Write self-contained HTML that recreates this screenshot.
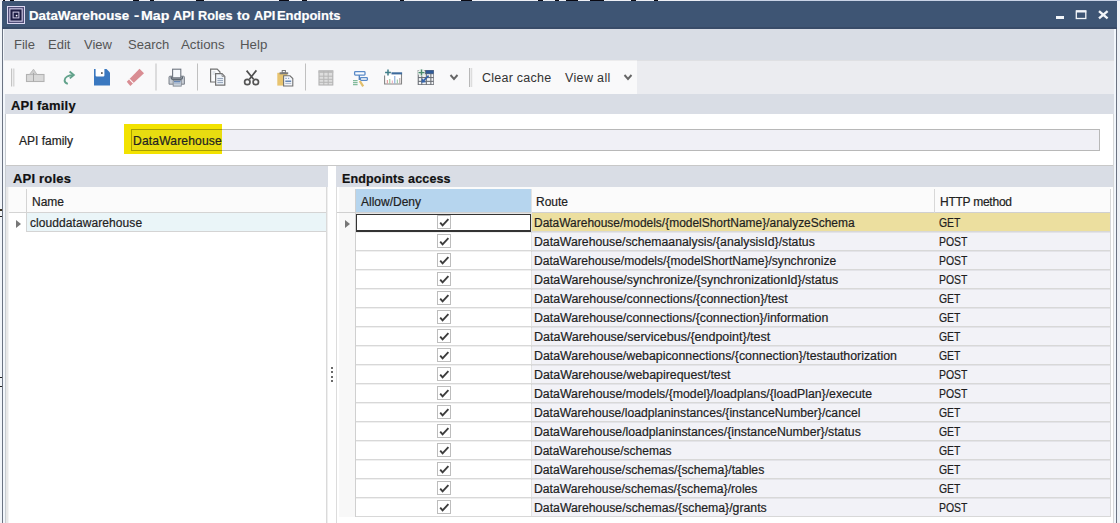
<!DOCTYPE html>
<html><head><meta charset="utf-8">
<style>
*{box-sizing:border-box;margin:0;padding:0}
html,body{width:1120px;height:523px;overflow:hidden;background:#fff;position:relative;font-family:"Liberation Sans",sans-serif;color:#1e1e1e}
.a{position:absolute}
.t{position:absolute;white-space:pre;line-height:1;-webkit-text-stroke:0.2px currentColor}
</style></head><body>
<!-- window frame -->
<div class="a" style="left:0;top:0;width:700px;height:1px;background:#eef0f6"></div>
<div class="a" style="left:700px;top:0;width:420px;height:1px;background:#c9d3e6"></div>
<div class="a" style="left:3px;top:0;width:2px;height:1px;background:#0a0a14"></div><div class="a" style="left:10px;top:0;width:4px;height:1px;background:#0a0a14"></div><div class="a" style="left:133px;top:0;width:6px;height:1px;background:#0a0a14"></div><div class="a" style="left:150px;top:0;width:4px;height:1px;background:#0a0a14"></div><div class="a" style="left:196px;top:0;width:8px;height:1px;background:#0a0a14"></div><div class="a" style="left:279px;top:0;width:10px;height:1px;background:#0a0a14"></div><div class="a" style="left:302px;top:0;width:5px;height:1px;background:#0a0a14"></div><div class="a" style="left:400px;top:0;width:4px;height:1px;background:#0a0a14"></div><div class="a" style="left:461px;top:0;width:11px;height:1px;background:#0a0a14"></div><div class="a" style="left:538px;top:0;width:5px;height:1px;background:#0a0a14"></div><div class="a" style="left:555px;top:0;width:4px;height:1px;background:#0a0a14"></div><div class="a" style="left:566px;top:0;width:12px;height:1px;background:#0a0a14"></div><div class="a" style="left:590px;top:0;width:14px;height:1px;background:#0a0a14"></div><div class="a" style="left:631px;top:0;width:5px;height:1px;background:#0a0a14"></div><div class="a" style="left:654px;top:0;width:4px;height:1px;background:#0a0a14"></div>
<div class="a" style="left:0;top:1px;width:2px;height:522px;background:#f2f5f9"></div>
<div class="a" style="left:1117px;top:1px;width:3px;height:522px;background:#eef1f6"></div>
<div class="a" style="left:2px;top:1px;width:1115px;height:522px;background:#6b7382"></div>
<div class="a" style="left:3px;top:29px;width:1113px;height:494px;background:#f2f6fb"></div>
<div class="a" style="left:0;top:377px;width:2px;height:1px;background:#222"></div><div class="a" style="left:0;top:386px;width:2px;height:1px;background:#222"></div><div class="a" style="left:0;top:209px;width:2px;height:2px;background:#3a3020"></div><div class="a" style="left:0;top:216px;width:2px;height:1px;background:#222"></div>
<!-- title bar -->
<div class="a" style="left:2px;top:1px;width:1115px;height:28px;background:#3e5574"></div>
<div class="a" style="left:2px;top:27px;width:1115px;height:2px;background:#384b68"></div>
<svg class="a" style="left:0;top:0" width="30" height="30" viewBox="0 0 30 30">
<rect x="7" y="6" width="18" height="18" fill="#dcd8f2"/>
<rect x="8" y="7" width="16" height="16" fill="#504e78"/>
<rect x="9.3" y="8.3" width="13.4" height="13.4" fill="#d2cee9"/>
<rect x="10.4" y="9.4" width="11.2" height="11.2" fill="#1e1d44"/>
<rect x="12.6" y="11.6" width="6.8" height="6.8" fill="#cfcbe6"/>
<rect x="13.6" y="12.6" width="4.8" height="4.8" fill="#1e1d44"/>
<circle cx="16.6" cy="15.6" r="0.9" fill="#fff"/>
</svg>
<div class="t" style="left:29px;top:9px;font-size:13px;font-weight:bold;color:#fff;transform:scaleX(1.024);transform-origin:0 0">DataWarehouse</div><div class="t" style="left:134.3px;top:9px;font-size:13px;font-weight:bold;color:#fff;transform:scaleX(1.2);transform-origin:0 0">-</div><div class="t" style="left:141.1px;top:9px;font-size:13px;font-weight:bold;color:#fff;transform:scaleX(1.088);transform-origin:0 0">Map</div><div class="t" style="left:172.9px;top:9px;font-size:13px;font-weight:bold;color:#fff;transform:scaleX(0.986);transform-origin:0 0">API</div><div class="t" style="left:198.1px;top:9px;font-size:13px;font-weight:bold;color:#fff;transform:scaleX(0.976);transform-origin:0 0">Roles</div><div class="t" style="left:236.7px;top:9px;font-size:13px;font-weight:bold;color:#fff;transform:scaleX(1.04);transform-origin:0 0">to</div><div class="t" style="left:253.6px;top:9px;font-size:13px;font-weight:bold;color:#fff;transform:scaleX(0.986);transform-origin:0 0">API</div><div class="t" style="left:276.9px;top:9px;font-size:13px;font-weight:bold;color:#fff;transform:scaleX(1.0);transform-origin:0 0">Endpoints</div>
<svg class="a" style="left:1040px;top:0" width="80" height="30" viewBox="1040 0 80 30">
<rect x="1056" y="16" width="8" height="3" fill="#f2f5f9"/>
<rect x="1076.3" y="11" width="9.5" height="7.5" fill="none" stroke="#f2f5f9" stroke-width="1.3"/>
<rect x="1076" y="10.3" width="10.3" height="2.2" fill="#f2f5f9"/>
<path d="M1099 11.2 L1107.6 18.4 M1107.6 11.2 L1099 18.4" stroke="#f2f5f9" stroke-width="2.4"/>
</svg>
<!-- menu bar -->
<div class="a" style="left:4px;top:29px;width:1110px;height:31px;background:#d9dde5"></div>
<div class="t" style="left:14px;top:38px;font-size:13px;color:#555;-webkit-text-stroke:0">File</div>
<div class="t" style="left:48px;top:38px;font-size:13px;color:#555;-webkit-text-stroke:0">Edit</div>
<div class="t" style="left:84px;top:38px;font-size:13px;color:#555;-webkit-text-stroke:0">View</div>
<div class="t" style="left:128px;top:38px;font-size:13px;color:#555;-webkit-text-stroke:0">Search</div>
<div class="t" style="left:181px;top:38px;font-size:13.3px;color:#555;-webkit-text-stroke:0">Actions</div>
<div class="t" style="left:240px;top:38px;font-size:13.3px;color:#555;-webkit-text-stroke:0">Help</div>
<!-- toolbar -->
<div class="a" style="left:4px;top:60px;width:1110px;height:34px;background:#ebecf0"></div>
<div class="a" style="left:4px;top:60px;width:633px;height:34px;background:#f9f9fa"></div><div class="a" style="left:4px;top:60px;width:1110px;height:1px;background:rgba(0,0,0,0.05)"></div>
<svg class="a" style="left:0;top:0" width="660" height="100" viewBox="0 0 660 100">
<!-- grip -->
<rect x="11" y="68.5" width="1.2" height="18" fill="#c4c4c4"/><rect x="13.2" y="68.5" width="1.2" height="18" fill="#d0d0d0"/>
<!-- icon1 gray hand -->
<rect x="26.5" y="74.5" width="17.5" height="7" fill="#d9d9d9" stroke="#b2b2b2" stroke-width="1.1"/>
<path d="M29.5 74.5 L33.5 69.2 L37 74.5 Z" fill="#cdcdcd" stroke="#b8b8b8" stroke-width="0.9"/>
<path d="M33.5 73 V81.5" stroke="#a8a8a8" stroke-width="1"/>
<!-- icon2 green redo -->
<path d="M73 75.2 C68.5 75.2 64.8 77 64.6 80.2 C64.5 81.8 66 83.2 67.8 83.8" fill="none" stroke="#62a28b" stroke-width="1.9"/>
<path d="M69.6 71.6 L73.8 75 L69.8 78.4" fill="none" stroke="#62a28b" stroke-width="1.9"/>
<!-- icon3 save -->
<path d="M94 69 H106.5 L110 72.5 V85.5 H94 Z" fill="#3a78c0"/>
<path d="M95.6 69 H104.4 V75.5 Q104.4 76.6 103.3 76.6 H96.7 Q95.6 76.6 95.6 75.5 Z" fill="#fff"/>
<rect x="101" y="72.2" width="1.7" height="1.7" fill="#555"/>
<!-- icon4 eraser -->
<path d="M139.5 68.8 L144 73.2 L130.3 86 L126.8 81.8 Z" fill="#d98d93"/>
<path d="M129.4 79.2 L133.5 83.4" stroke="#fff" stroke-width="1.1"/>
<!-- sep -->
<rect x="155.5" y="63.5" width="1" height="27" fill="#c0c0c0"/>
<!-- printer -->
<path d="M170 76.2 H183.5 Q184.4 76.2 184.4 77.2 V84.2 H169 V77.2 Q169 76.2 170 76.2 Z" fill="#c9ced5" stroke="#6f7680" stroke-width="0.9"/>
<rect x="172.6" y="69.2" width="8.2" height="8.6" fill="#f6f9fc" stroke="#6f7680" stroke-width="1.1"/>
<path d="M171.2 76.5 V77.8 Q171.2 79.2 172.6 79.2 H181 Q182.4 79.2 182.4 77.8 V76.5" fill="none" stroke="#5c6670" stroke-width="1.4"/>
<rect x="173.2" y="80.3" width="8" height="5.8" fill="#edf1f6" stroke="#7a828c" stroke-width="0.9"/>
<path d="M174 81.8 H180.5" stroke="#4f74a8" stroke-width="1.3"/>
<path d="M174 83.6 H180.5 M174 85 H180.5" stroke="#98a6b8" stroke-width="0.8"/>
<!-- sep -->
<rect x="197" y="63.5" width="1" height="27" fill="#c0c0c0"/>
<!-- copy -->
<path d="M210.6 69.2 H217.2 L220 72 V82 H210.6 Z" fill="#fbfcfd" stroke="#727272" stroke-width="1.2"/>
<path d="M212.5 72 H215.5 M212.5 74 H215" stroke="#b8c0cc" stroke-width="0.7"/>
<path d="M215.6 73.6 H222 L224.8 76.4 V85.2 H215.6 Z" fill="#eef3f9" stroke="#727272" stroke-width="1.2"/>
<path d="M222 73.6 V76.4 H224.8" fill="none" stroke="#8a8a8a" stroke-width="0.9"/>
<path d="M217.4 78.6 H223 M217.4 80.6 H223 M217.4 82.6 H223" stroke="#8797b0" stroke-width="0.9"/>
<!-- scissors -->
<path d="M246.6 70.6 L253.6 79.2 M256.4 70.4 L249.4 79.2" stroke="#505050" stroke-width="1.7"/>
<circle cx="247.3" cy="82" r="2.7" fill="none" stroke="#555" stroke-width="1.7"/>
<circle cx="255.8" cy="82" r="2.7" fill="none" stroke="#555" stroke-width="1.7"/>
<!-- paste -->
<rect x="277.3" y="72.8" width="10" height="12.8" fill="#e8c46f"/>
<rect x="279.6" y="72.3" width="8.6" height="2" fill="#7a7a7a"/>
<rect x="282.2" y="70.5" width="3.2" height="2.4" fill="none" stroke="#777" stroke-width="1"/>
<path d="M283.6 75.8 H290 L292.8 78.6 V86 H283.6 Z" fill="#f4f7fb" stroke="#707070" stroke-width="1.1"/>
<path d="M285.3 78.3 H286.8 M288 78.3 H289.2" stroke="#6a88b8" stroke-width="0.9"/>
<path d="M285.3 81.2 H291.2" stroke="#4f74a8" stroke-width="1.3"/>
<path d="M285.3 83.4 H291.2" stroke="#98a8c0" stroke-width="0.8"/>
<!-- sep -->
<rect x="305" y="63.5" width="1" height="27" fill="#c0c0c0"/>
<!-- grid gray -->
<rect x="319" y="71" width="13.8" height="14" fill="#dedede" stroke="#b2b2b2" stroke-width="1.1"/>
<rect x="318.6" y="70.3" width="14.6" height="2.6" fill="#bcbcbc"/>
<path d="M319 76.2 H333 M319 79.3 H333 M319 82.3 H333 M323.8 71 V85 M328.2 71 V85" stroke="#b6b6b6" stroke-width="1"/>
<!-- hierarchy -->
<rect x="354.6" y="71.7" width="10.4" height="3.4" rx="0.8" fill="#fafcff" stroke="#5a8ac8" stroke-width="1.3"/>
<path d="M359.3 75.2 V80" stroke="#4a7ab8" stroke-width="1.3"/>
<rect x="360.4" y="77.6" width="7" height="2.8" rx="0.8" fill="#fafcff" stroke="#5a8ac8" stroke-width="1.3"/>
<path d="M353 80.6 H357.6 M353 82.6 H357.6 M353 84.6 H357.6" stroke="#82bb9c" stroke-width="1.3"/>
<path d="M359.8 81 L363.2 86.3" stroke="#e2bf6c" stroke-width="2.3"/>
<!-- chart add -->
<path d="M384.6 75.5 V84 H401.5 V73.5" fill="#fff" stroke="#858585" stroke-width="1.1"/>
<rect x="391.5" y="72.3" width="10.6" height="2.1" fill="#3c6a9c"/>
<path d="M387.3 80 V83.5" stroke="#de8a8a" stroke-width="1"/>
<path d="M389.8 79 V83.5" stroke="#8cc48c" stroke-width="1"/>
<path d="M392.3 80.5 V83.5" stroke="#e6a6b6" stroke-width="1"/>
<path d="M394.8 76 V83.5" stroke="#7aa2d4" stroke-width="1"/>
<path d="M397.3 79.5 V83.5" stroke="#8cc09a" stroke-width="1"/>
<path d="M399.8 78 V83.5" stroke="#b09a9a" stroke-width="1"/>
<path d="M388 69.6 V75.4 M385.1 72.5 H390.9" stroke="#3f7e88" stroke-width="1.5"/>
<!-- table add -->
<rect x="417.7" y="70" width="16.2" height="15" fill="#6d7178"/>
<rect x="418.8" y="74.2" width="2.4" height="2.8" fill="#f2f4f6"/><rect x="422.3" y="74.2" width="3.5" height="2.8" fill="#f2f4f6"/><rect x="426.9" y="74.2" width="3.4" height="2.8" fill="#f2f4f6"/><rect x="431.4" y="74.2" width="1.8" height="2.8" fill="#f2f4f6"/><rect x="418.8" y="78.1" width="2.4" height="2.7" fill="#f2f4f6"/><rect x="422.3" y="78.1" width="3.5" height="2.7" fill="#f2f4f6"/><rect x="426.9" y="78.1" width="3.4" height="2.7" fill="#f2f4f6"/><rect x="431.4" y="78.1" width="1.8" height="2.7" fill="#f2f4f6"/><rect x="418.8" y="81.9" width="2.4" height="2.3" fill="#f2f4f6"/><rect x="422.3" y="81.9" width="3.5" height="2.3" fill="#f2f4f6"/><rect x="426.9" y="81.9" width="3.4" height="2.3" fill="#f2f4f6"/><rect x="431.4" y="81.9" width="1.8" height="2.3" fill="#f2f4f6"/>
<rect x="425.8" y="70.4" width="7.8" height="3.2" fill="#2f5a98"/>
<circle cx="421.5" cy="72.6" r="3.6" fill="#e6eeea"/>
<path d="M421.5 69.6 V75.6 M418.5 72.6 H424.5" stroke="#4a8a6c" stroke-width="1.4"/>
<path d="M428.6 75.6 L423.6 80.6" stroke="#3564ac" stroke-width="1.6"/>
<path d="M421.4 82.8 L421.9 78.2 L426 82.3 Z" fill="#3564ac"/>
<!-- chevron -->
<path d="M450.5 75 L454 79 L457.5 75" fill="none" stroke="#666" stroke-width="1.9"/>
<!-- sep double -->
<rect x="469" y="68" width="1.2" height="19" fill="#b8b8b8"/><rect x="471.2" y="68" width="1" height="19" fill="#d6d6d6"/>
<!-- chevron 2 -->
<path d="M624.5 75 L628 79 L631.5 75" fill="none" stroke="#666" stroke-width="1.9"/>
</svg>
<div class="t" style="left:482px;top:72px;font-size:12.5px;color:#333;letter-spacing:0.25px;-webkit-text-stroke:0">Clear cache</div>
<div class="t" style="left:565px;top:72px;font-size:12.5px;color:#333;letter-spacing:0.35px;-webkit-text-stroke:0">View all</div>
<!-- API family header -->
<div class="a" style="left:5px;top:94px;width:1109px;height:20px;background:#d9dde5"></div>
<div class="t" style="left:11px;top:99px;font-size:13px;font-weight:bold;color:#111;letter-spacing:0.2px">API family</div>
<div class="a" style="left:5px;top:114px;width:1px;height:409px;background:#c8ccd0"></div>
<div class="a" style="left:6px;top:114px;width:1107px;height:51px;background:#fff"></div>
<div class="a" style="left:1113px;top:114px;width:1px;height:409px;background:#d6d8da"></div>
<div class="t" style="left:19px;top:135px;font-size:12px;color:#222">API family</div>
<div class="a" style="left:124px;top:124px;width:98px;height:30px;background:#f2e200"></div>
<div class="a" style="left:131px;top:129px;width:969px;height:22px;background:#f0f0f6;border:1px solid #b8b8b8"></div>
<div class="a" style="left:132px;top:130px;width:90px;height:20px;background:#e8dc10"></div>
<div class="a" style="left:131px;top:129px;width:91px;height:22px;border:1px solid #a8a000;border-right:0"></div>
<div class="t" style="left:133px;top:135px;font-size:12.1px;color:#222;letter-spacing:0.15px">DataWarehouse</div>
<!-- lower area -->
<div class="a" style="left:6px;top:165px;width:1107px;height:358px;background:#fff;border-top:1px solid #c8c8c8"></div>
<!-- API roles panel -->
<div class="a" style="left:6px;top:166px;width:322px;height:21px;background:#d9dde5"></div>
<div class="t" style="left:13px;top:172px;font-size:13px;font-weight:bold;color:#111;letter-spacing:0.2px">API roles</div>
<div class="a" style="left:6px;top:187px;width:2px;height:336px;background:#e8e8e8"></div><div class="a" style="left:8px;top:187px;width:1px;height:336px;background:#f4f4f4"></div>
<div class="a" style="left:326px;top:187px;width:1px;height:336px;background:#dadada"></div><div class="a" style="left:327px;top:187px;width:1px;height:336px;background:#efefef"></div>
<div class="a" style="left:9px;top:187px;width:317px;height:25px;background:#fbfbfb"></div>
<div class="a" style="left:9px;top:212px;width:317px;height:1px;background:#d4d4d4"></div>
<div class="a" style="left:26px;top:189px;width:1px;height:43px;background:#d4d4d4"></div>
<div class="t" style="left:32px;top:196px;font-size:12px;color:#222">Name</div>
<div class="a" style="left:27px;top:213px;width:299px;height:19px;background:#eaf5f8;border-bottom:1px solid #d4d4d4"></div>
<div class="a" style="left:16px;top:220px;width:0;height:0;border-top:4px solid transparent;border-bottom:4px solid transparent;border-left:5px solid #777"></div>
<div class="t" style="left:30px;top:217px;font-size:12px;color:#222;letter-spacing:0.08px">clouddatawarehouse</div>
<!-- splitter -->
<div class="a" style="left:331px;top:366.5px;width:2px;height:2px;background:#6a6a6a"></div>
<div class="a" style="left:331px;top:371px;width:2px;height:2px;background:#6a6a6a"></div>
<div class="a" style="left:331px;top:375.5px;width:2px;height:2px;background:#6a6a6a"></div>
<div class="a" style="left:331px;top:380px;width:2px;height:2px;background:#6a6a6a"></div>
<!-- Endpoints panel -->
<div class="a" style="left:336px;top:166px;width:777px;height:21px;background:#d9dde5"></div>
<div class="t" style="left:342px;top:173px;font-size:12.5px;font-weight:bold;color:#111;letter-spacing:0.15px">Endpoints access</div>
<div class="a" style="left:337px;top:187px;width:774px;height:336px;background:#fff"></div>
<div class="a" style="left:336px;top:187px;width:1px;height:336px;background:#dcdcdc"></div>
<div class="a" style="left:339px;top:187px;width:16px;height:330px;background:#f8f8f8"></div>
<div class="a" style="left:355px;top:187px;width:755px;height:25px;background:#fbfbfb"></div>
<div class="a" style="left:356px;top:189px;width:175px;height:23px;background:#b6d5ee"></div>
<div class="a" style="left:337px;top:212px;width:773px;height:1px;background:#d0d0d0"></div>
<div class="a" style="left:356px;top:213px;width:754px;height:1px;background:#e6e6e6"></div>
<div class="a" style="left:355px;top:189px;width:1px;height:328px;background:#d0d0d0"></div>
<div class="a" style="left:934px;top:189px;width:1px;height:328px;background:#d8d8d8"></div>
<div class="a" style="left:1110px;top:189px;width:1px;height:328px;background:#d8d8d8"></div>
<div class="t" style="left:361px;top:196px;font-size:12px;color:#222">Allow/Deny</div>
<div class="t" style="left:536px;top:196px;font-size:12px;color:#222">Route</div>
<div class="t" style="left:940px;top:196px;font-size:12px;color:#222;letter-spacing:-0.25px">HTTP method</div>
<div class="a" style="left:531px;top:213px;width:579px;height:19px;background:#ecdf9f"></div>
<div class="a" style="left:531px;top:232px;width:579px;height:19px;background:#f2f2f7"></div>
<div class="a" style="left:531px;top:251px;width:579px;height:19px;background:#f2f2f7"></div>
<div class="a" style="left:531px;top:270px;width:579px;height:19px;background:#f2f2f7"></div>
<div class="a" style="left:531px;top:289px;width:579px;height:19px;background:#f2f2f7"></div>
<div class="a" style="left:531px;top:308px;width:579px;height:19px;background:#f2f2f7"></div>
<div class="a" style="left:531px;top:327px;width:579px;height:19px;background:#f2f2f7"></div>
<div class="a" style="left:531px;top:346px;width:579px;height:19px;background:#f2f2f7"></div>
<div class="a" style="left:531px;top:365px;width:579px;height:19px;background:#f2f2f7"></div>
<div class="a" style="left:531px;top:384px;width:579px;height:19px;background:#f2f2f7"></div>
<div class="a" style="left:531px;top:403px;width:579px;height:19px;background:#f2f2f7"></div>
<div class="a" style="left:531px;top:422px;width:579px;height:19px;background:#f2f2f7"></div>
<div class="a" style="left:531px;top:441px;width:579px;height:19px;background:#f2f2f7"></div>
<div class="a" style="left:531px;top:460px;width:579px;height:19px;background:#f2f2f7"></div>
<div class="a" style="left:531px;top:479px;width:579px;height:19px;background:#f2f2f7"></div>
<div class="a" style="left:531px;top:498px;width:579px;height:19px;background:#f2f2f7"></div>
<div class="a" style="left:531px;top:189px;width:1px;height:328px;background:#e2e2e2"></div>
<div class="a" style="left:356px;top:231px;width:754px;height:1px;background:#d8d8d8"></div>
<div class="a" style="left:356px;top:232px;width:754px;height:1px;background:rgba(0,0,0,0.06)"></div>
<div class="a" style="left:356px;top:250px;width:754px;height:1px;background:#d8d8d8"></div>
<div class="a" style="left:356px;top:251px;width:754px;height:1px;background:rgba(0,0,0,0.06)"></div>
<div class="a" style="left:356px;top:269px;width:754px;height:1px;background:#d8d8d8"></div>
<div class="a" style="left:356px;top:270px;width:754px;height:1px;background:rgba(0,0,0,0.06)"></div>
<div class="a" style="left:356px;top:288px;width:754px;height:1px;background:#d8d8d8"></div>
<div class="a" style="left:356px;top:289px;width:754px;height:1px;background:rgba(0,0,0,0.06)"></div>
<div class="a" style="left:356px;top:307px;width:754px;height:1px;background:#d8d8d8"></div>
<div class="a" style="left:356px;top:308px;width:754px;height:1px;background:rgba(0,0,0,0.06)"></div>
<div class="a" style="left:356px;top:326px;width:754px;height:1px;background:#d8d8d8"></div>
<div class="a" style="left:356px;top:327px;width:754px;height:1px;background:rgba(0,0,0,0.06)"></div>
<div class="a" style="left:356px;top:345px;width:754px;height:1px;background:#d8d8d8"></div>
<div class="a" style="left:356px;top:346px;width:754px;height:1px;background:rgba(0,0,0,0.06)"></div>
<div class="a" style="left:356px;top:364px;width:754px;height:1px;background:#d8d8d8"></div>
<div class="a" style="left:356px;top:365px;width:754px;height:1px;background:rgba(0,0,0,0.06)"></div>
<div class="a" style="left:356px;top:383px;width:754px;height:1px;background:#d8d8d8"></div>
<div class="a" style="left:356px;top:384px;width:754px;height:1px;background:rgba(0,0,0,0.06)"></div>
<div class="a" style="left:356px;top:402px;width:754px;height:1px;background:#d8d8d8"></div>
<div class="a" style="left:356px;top:403px;width:754px;height:1px;background:rgba(0,0,0,0.06)"></div>
<div class="a" style="left:356px;top:421px;width:754px;height:1px;background:#d8d8d8"></div>
<div class="a" style="left:356px;top:422px;width:754px;height:1px;background:rgba(0,0,0,0.06)"></div>
<div class="a" style="left:356px;top:440px;width:754px;height:1px;background:#d8d8d8"></div>
<div class="a" style="left:356px;top:441px;width:754px;height:1px;background:rgba(0,0,0,0.06)"></div>
<div class="a" style="left:356px;top:459px;width:754px;height:1px;background:#d8d8d8"></div>
<div class="a" style="left:356px;top:460px;width:754px;height:1px;background:rgba(0,0,0,0.06)"></div>
<div class="a" style="left:356px;top:478px;width:754px;height:1px;background:#d8d8d8"></div>
<div class="a" style="left:356px;top:479px;width:754px;height:1px;background:rgba(0,0,0,0.06)"></div>
<div class="a" style="left:356px;top:497px;width:754px;height:1px;background:#d8d8d8"></div>
<div class="a" style="left:356px;top:498px;width:754px;height:1px;background:rgba(0,0,0,0.06)"></div>
<div class="a" style="left:356px;top:516px;width:754px;height:1px;background:#d8d8d8"></div>
<div class="a" style="left:437px;top:215px;width:14px;height:14px;border:1px solid #bdbdbd;background:#fff"></div>
<svg class="a" style="left:437px;top:215px" width="14" height="14" viewBox="0 0 14 14"><path d="M3.2 7.6 L5.6 10.4 L11.4 4.2" fill="none" stroke="#3c3c3c" stroke-width="1.9"/></svg>
<div class="t" style="left:534px;top:217px;font-size:12px;color:#1e1e1e;transform:scaleX(0.9966);transform-origin:0 0">DataWarehouse/models/{modelShortName}/analyzeSchema</div>
<div class="t" style="left:938.5px;top:217px;font-size:12px;color:#1e1e1e;transform:scaleX(0.87);transform-origin:0 0">GET</div>
<div class="a" style="left:437px;top:234px;width:14px;height:14px;border:1px solid #bdbdbd;background:#fff"></div>
<svg class="a" style="left:437px;top:234px" width="14" height="14" viewBox="0 0 14 14"><path d="M3.2 7.6 L5.6 10.4 L11.4 4.2" fill="none" stroke="#3c3c3c" stroke-width="1.9"/></svg>
<div class="t" style="left:534px;top:236px;font-size:12px;color:#1e1e1e;transform:scaleX(1.0208);transform-origin:0 0">DataWarehouse/schemaanalysis/{analysisId}/status</div>
<div class="t" style="left:938.5px;top:236px;font-size:12px;color:#1e1e1e;transform:scaleX(0.87);transform-origin:0 0">POST</div>
<div class="a" style="left:437px;top:253px;width:14px;height:14px;border:1px solid #bdbdbd;background:#fff"></div>
<svg class="a" style="left:437px;top:253px" width="14" height="14" viewBox="0 0 14 14"><path d="M3.2 7.6 L5.6 10.4 L11.4 4.2" fill="none" stroke="#3c3c3c" stroke-width="1.9"/></svg>
<div class="t" style="left:534px;top:255px;font-size:12px;color:#1e1e1e;transform:scaleX(1.0063);transform-origin:0 0">DataWarehouse/models/{modelShortName}/synchronize</div>
<div class="t" style="left:938.5px;top:255px;font-size:12px;color:#1e1e1e;transform:scaleX(0.87);transform-origin:0 0">POST</div>
<div class="a" style="left:437px;top:272px;width:14px;height:14px;border:1px solid #bdbdbd;background:#fff"></div>
<svg class="a" style="left:437px;top:272px" width="14" height="14" viewBox="0 0 14 14"><path d="M3.2 7.6 L5.6 10.4 L11.4 4.2" fill="none" stroke="#3c3c3c" stroke-width="1.9"/></svg>
<div class="t" style="left:534px;top:274px;font-size:12px;color:#1e1e1e;transform:scaleX(1.0359);transform-origin:0 0">DataWarehouse/synchronize/{synchronizationId}/status</div>
<div class="t" style="left:938.5px;top:274px;font-size:12px;color:#1e1e1e;transform:scaleX(0.87);transform-origin:0 0">POST</div>
<div class="a" style="left:437px;top:291px;width:14px;height:14px;border:1px solid #bdbdbd;background:#fff"></div>
<svg class="a" style="left:437px;top:291px" width="14" height="14" viewBox="0 0 14 14"><path d="M3.2 7.6 L5.6 10.4 L11.4 4.2" fill="none" stroke="#3c3c3c" stroke-width="1.9"/></svg>
<div class="t" style="left:534px;top:293px;font-size:12px;color:#1e1e1e;transform:scaleX(1.0326);transform-origin:0 0">DataWarehouse/connections/{connection}/test</div>
<div class="t" style="left:938.5px;top:293px;font-size:12px;color:#1e1e1e;transform:scaleX(0.87);transform-origin:0 0">GET</div>
<div class="a" style="left:437px;top:310px;width:14px;height:14px;border:1px solid #bdbdbd;background:#fff"></div>
<svg class="a" style="left:437px;top:310px" width="14" height="14" viewBox="0 0 14 14"><path d="M3.2 7.6 L5.6 10.4 L11.4 4.2" fill="none" stroke="#3c3c3c" stroke-width="1.9"/></svg>
<div class="t" style="left:534px;top:312px;font-size:12px;color:#1e1e1e;transform:scaleX(1.0299);transform-origin:0 0">DataWarehouse/connections/{connection}/information</div>
<div class="t" style="left:938.5px;top:312px;font-size:12px;color:#1e1e1e;transform:scaleX(0.87);transform-origin:0 0">GET</div>
<div class="a" style="left:437px;top:329px;width:14px;height:14px;border:1px solid #bdbdbd;background:#fff"></div>
<svg class="a" style="left:437px;top:329px" width="14" height="14" viewBox="0 0 14 14"><path d="M3.2 7.6 L5.6 10.4 L11.4 4.2" fill="none" stroke="#3c3c3c" stroke-width="1.9"/></svg>
<div class="t" style="left:534px;top:331px;font-size:12px;color:#1e1e1e;transform:scaleX(1.0406);transform-origin:0 0">DataWarehouse/servicebus/{endpoint}/test</div>
<div class="t" style="left:938.5px;top:331px;font-size:12px;color:#1e1e1e;transform:scaleX(0.87);transform-origin:0 0">GET</div>
<div class="a" style="left:437px;top:348px;width:14px;height:14px;border:1px solid #bdbdbd;background:#fff"></div>
<svg class="a" style="left:437px;top:348px" width="14" height="14" viewBox="0 0 14 14"><path d="M3.2 7.6 L5.6 10.4 L11.4 4.2" fill="none" stroke="#3c3c3c" stroke-width="1.9"/></svg>
<div class="t" style="left:534px;top:350px;font-size:12px;color:#1e1e1e;transform:scaleX(1.0296);transform-origin:0 0">DataWarehouse/webapiconnections/{connection}/testauthorization</div>
<div class="t" style="left:938.5px;top:350px;font-size:12px;color:#1e1e1e;transform:scaleX(0.87);transform-origin:0 0">GET</div>
<div class="a" style="left:437px;top:367px;width:14px;height:14px;border:1px solid #bdbdbd;background:#fff"></div>
<svg class="a" style="left:437px;top:367px" width="14" height="14" viewBox="0 0 14 14"><path d="M3.2 7.6 L5.6 10.4 L11.4 4.2" fill="none" stroke="#3c3c3c" stroke-width="1.9"/></svg>
<div class="t" style="left:534px;top:369px;font-size:12px;color:#1e1e1e;transform:scaleX(1.0317);transform-origin:0 0">DataWarehouse/webapirequest/test</div>
<div class="t" style="left:938.5px;top:369px;font-size:12px;color:#1e1e1e;transform:scaleX(0.87);transform-origin:0 0">POST</div>
<div class="a" style="left:437px;top:386px;width:14px;height:14px;border:1px solid #bdbdbd;background:#fff"></div>
<svg class="a" style="left:437px;top:386px" width="14" height="14" viewBox="0 0 14 14"><path d="M3.2 7.6 L5.6 10.4 L11.4 4.2" fill="none" stroke="#3c3c3c" stroke-width="1.9"/></svg>
<div class="t" style="left:534px;top:388px;font-size:12px;color:#1e1e1e;transform:scaleX(1.0231);transform-origin:0 0">DataWarehouse/models/{model}/loadplans/{loadPlan}/execute</div>
<div class="t" style="left:938.5px;top:388px;font-size:12px;color:#1e1e1e;transform:scaleX(0.87);transform-origin:0 0">POST</div>
<div class="a" style="left:437px;top:405px;width:14px;height:14px;border:1px solid #bdbdbd;background:#fff"></div>
<svg class="a" style="left:437px;top:405px" width="14" height="14" viewBox="0 0 14 14"><path d="M3.2 7.6 L5.6 10.4 L11.4 4.2" fill="none" stroke="#3c3c3c" stroke-width="1.9"/></svg>
<div class="t" style="left:534px;top:407px;font-size:12px;color:#1e1e1e;transform:scaleX(1.0124);transform-origin:0 0">DataWarehouse/loadplaninstances/{instanceNumber}/cancel</div>
<div class="t" style="left:938.5px;top:407px;font-size:12px;color:#1e1e1e;transform:scaleX(0.87);transform-origin:0 0">GET</div>
<div class="a" style="left:437px;top:424px;width:14px;height:14px;border:1px solid #bdbdbd;background:#fff"></div>
<svg class="a" style="left:437px;top:424px" width="14" height="14" viewBox="0 0 14 14"><path d="M3.2 7.6 L5.6 10.4 L11.4 4.2" fill="none" stroke="#3c3c3c" stroke-width="1.9"/></svg>
<div class="t" style="left:534px;top:426px;font-size:12px;color:#1e1e1e;transform:scaleX(1.022);transform-origin:0 0">DataWarehouse/loadplaninstances/{instanceNumber}/status</div>
<div class="t" style="left:938.5px;top:426px;font-size:12px;color:#1e1e1e;transform:scaleX(0.87);transform-origin:0 0">GET</div>
<div class="a" style="left:437px;top:443px;width:14px;height:14px;border:1px solid #bdbdbd;background:#fff"></div>
<svg class="a" style="left:437px;top:443px" width="14" height="14" viewBox="0 0 14 14"><path d="M3.2 7.6 L5.6 10.4 L11.4 4.2" fill="none" stroke="#3c3c3c" stroke-width="1.9"/></svg>
<div class="t" style="left:534px;top:445px;font-size:12px;color:#1e1e1e;transform:scaleX(1.0);transform-origin:0 0">DataWarehouse/schemas</div>
<div class="t" style="left:938.5px;top:445px;font-size:12px;color:#1e1e1e;transform:scaleX(0.87);transform-origin:0 0">GET</div>
<div class="a" style="left:437px;top:462px;width:14px;height:14px;border:1px solid #bdbdbd;background:#fff"></div>
<svg class="a" style="left:437px;top:462px" width="14" height="14" viewBox="0 0 14 14"><path d="M3.2 7.6 L5.6 10.4 L11.4 4.2" fill="none" stroke="#3c3c3c" stroke-width="1.9"/></svg>
<div class="t" style="left:534px;top:464px;font-size:12px;color:#1e1e1e;transform:scaleX(1.0173);transform-origin:0 0">DataWarehouse/schemas/{schema}/tables</div>
<div class="t" style="left:938.5px;top:464px;font-size:12px;color:#1e1e1e;transform:scaleX(0.87);transform-origin:0 0">GET</div>
<div class="a" style="left:437px;top:481px;width:14px;height:14px;border:1px solid #bdbdbd;background:#fff"></div>
<svg class="a" style="left:437px;top:481px" width="14" height="14" viewBox="0 0 14 14"><path d="M3.2 7.6 L5.6 10.4 L11.4 4.2" fill="none" stroke="#3c3c3c" stroke-width="1.9"/></svg>
<div class="t" style="left:534px;top:483px;font-size:12px;color:#1e1e1e;transform:scaleX(1.0141);transform-origin:0 0">DataWarehouse/schemas/{schema}/roles</div>
<div class="t" style="left:938.5px;top:483px;font-size:12px;color:#1e1e1e;transform:scaleX(0.87);transform-origin:0 0">GET</div>
<div class="a" style="left:437px;top:500px;width:14px;height:14px;border:1px solid #bdbdbd;background:#fff"></div>
<svg class="a" style="left:437px;top:500px" width="14" height="14" viewBox="0 0 14 14"><path d="M3.2 7.6 L5.6 10.4 L11.4 4.2" fill="none" stroke="#3c3c3c" stroke-width="1.9"/></svg>
<div class="t" style="left:534px;top:502px;font-size:12px;color:#1e1e1e;transform:scaleX(1.0221);transform-origin:0 0">DataWarehouse/schemas/{schema}/grants</div>
<div class="t" style="left:938.5px;top:502px;font-size:12px;color:#1e1e1e;transform:scaleX(0.87);transform-origin:0 0">POST</div>
<div class="a" style="left:345px;top:220px;width:0;height:0;border-top:4px solid transparent;border-bottom:4px solid transparent;border-left:5px solid #777"></div>
<div class="a" style="left:356px;top:214px;width:175px;height:18px;border:1px solid #333;border-bottom-width:2px"></div>
</body></html>
